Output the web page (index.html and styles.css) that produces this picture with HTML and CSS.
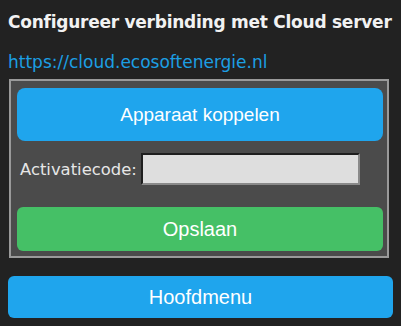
FILE: index.html
```html
<!DOCTYPE html>
<html lang="nl">
<head>
    <meta charset="UTF-8">
    <title>Cloud server</title>
    <link rel="stylesheet" href="styles.css">
</head>
<body>

    <h2 class="title">Configureer verbinding met Cloud server</h2>
    <a class="cloud-link" href="#">https://cloud.ecosoftenergie.nl</a>

    <div class="panel">
        <button class="btn btn-blue btn-pair">Apparaat koppelen</button>
        <div class="code-row">
            <label for="code">Activatiecode:</label>
            <input type="text" id="code">
        </div>
        <button class="btn btn-green btn-save">Opslaan</button>
    </div>

    <button class="btn btn-blue btn-menu">Hoofdmenu</button>

</body>
</html>
```

FILE: styles.css
```css
body {
    margin: 0;
    padding: 8px;
    background-color: #222;
    font-family: "DejaVu Sans", Verdana, sans-serif;
    color: #eee;
}
.title {
    margin: 4px 0 0;
    font-size: 17px;
    line-height: 20px;
    font-weight: bold;
    letter-spacing: -0.25px;
    white-space: nowrap;
    color: #f2f2f2;
}
.cloud-link {
    display: block;
    margin-top: 20px;
    font-size: 17px;
    line-height: 20px;
    color: #1c9fe4;
    text-decoration: none;
}
.panel {
    margin: 7px 4px 0 1px;
    padding: 7px 4px 5px 6px;
    border: 2px solid #9a9a9a;
    background-color: #4b4b4b;
}
.btn {
    display: block;
    width: 100%;
    border: none;
    color: #fff;
    font-family: "Liberation Sans", Arial, sans-serif;
    font-size: 20px;
    text-align: center;
    cursor: pointer;
}
.btn-blue {
    background-color: #1fa5ed;
}
.btn-green {
    background-color: #45c066;
}
.btn-pair {
    height: 53px;
    border-radius: 8px;
    font-size: 19px;
}
.code-row {
    display: flex;
    align-items: center;
    margin: 12px 0 22px;
}
.code-row label {
    margin-left: 3px;
    font-size: 16.4px;
    color: #e6e6e6;
}
.code-row input {
    margin-left: 4px;
    width: 219px;
    height: 32px;
    padding: 0 4px;
    border: 2px solid;
    border-color: #1e1e1e #8a8a8a #8a8a8a #1e1e1e;
    background-color: #dedede;
    box-sizing: border-box;
}
.btn-save {
    height: 44px;
    border-radius: 6px;
}
.btn-menu {
    margin-top: 18px;
    height: 42px;
    border-radius: 6px;
}
```
